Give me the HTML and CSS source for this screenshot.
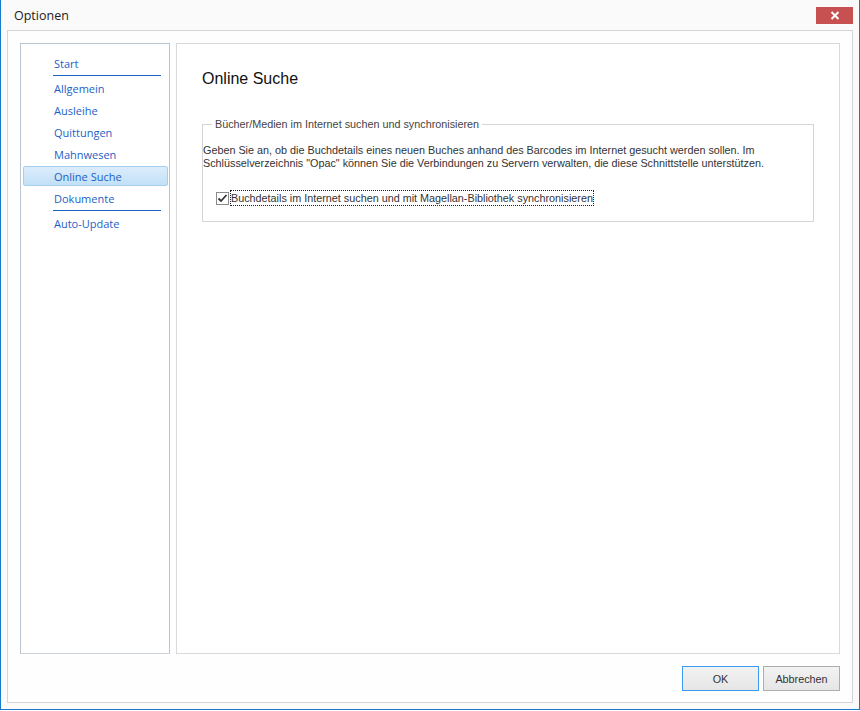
FILE: index.html
```html
<!DOCTYPE html>
<html lang="de">
<head>
    <meta charset="UTF-8">
    <title>Optionen</title>
    <link rel="stylesheet" href="styles.css">
</head>
<body>
    <div class="window">
        <div class="titlebar">
            <span class="title">Optionen</span>
            <button class="close-button" aria-label="Schließen">
                <svg width="10" height="9" viewBox="0 0 10 9"><path d="M1.5 1 L8.5 8 M8.5 1 L1.5 8" stroke="#fff" stroke-width="2" fill="none"/></svg>
            </button>
        </div>

        <div class="frame">
            <div class="main">
                <!-- Navigation -->
                <ul class="nav">
                    <li class="nav-item">Start</li>
                    <li class="nav-separator"></li>
                    <li class="nav-item">Allgemein</li>
                    <li class="nav-item">Ausleihe</li>
                    <li class="nav-item">Quittungen</li>
                    <li class="nav-item">Mahnwesen</li>
                    <li class="nav-item selected">Online Suche</li>
                    <li class="nav-item">Dokumente</li>
                    <li class="nav-separator"></li>
                    <li class="nav-item">Auto-Update</li>
                </ul>

                <!-- Page content -->
                <div class="content">
                    <h1>Online Suche</h1>
                    <fieldset class="group">
                        <legend>Bücher/Medien im Internet suchen und synchronisieren</legend>
                        <p class="group-text">Geben Sie an, ob die Buchdetails eines neuen Buches anhand des Barcodes im Internet gesucht werden sollen. Im<br>Schlüsselverzeichnis "Opac" können Sie die Verbindungen zu Servern verwalten, die diese Schnittstelle unterstützen.</p>
                        <label class="check-row">
                            <span class="checkbox">
                                <svg width="11" height="11" viewBox="0 0 11 11"><path d="M1.5 5.5 L4 8 L9.5 2" stroke="#333" stroke-width="1.8" fill="none"/></svg>
                            </span>
                            <span class="check-label">Buchdetails im Internet suchen und mit Magellan-Bibliothek synchronisieren</span>
                        </label>
                    </fieldset>
                </div>
            </div>

            <div class="footer">
                <button class="button default">OK</button>
                <button class="button">Abbrechen</button>
            </div>
        </div>
    </div>
</body>
</html>
```

FILE: styles.css
```css
body {
    margin: 0;
    padding: 0;
    background-color: #fff;
    font-family: 'Liberation Sans', Arial, sans-serif;
    color: #333;
}
.window {
    width: 860px;
    height: 710px;
    box-sizing: border-box;
    background-color: #fafafa;
    border-left: 1px solid #1979ca;
    border-right: 1px solid #1979ca;
    border-bottom: 1px solid #1979ca;
    padding: 0 6px 6px 6px;
    display: flex;
    flex-direction: column;
}
.titlebar {
    height: 30px;
    display: flex;
    align-items: flex-start;
    justify-content: space-between;
}
.title {
    font-family: 'Open Sans', sans-serif;
    font-size: 12.5px;
    color: #222;
    margin: 7px 0 0 7px;
}
.close-button {
    width: 37px;
    height: 17px;
    margin: 7px 0 0 0;
    border: none;
    padding: 0;
    background-color: #c75050;
    display: flex;
    align-items: center;
    justify-content: center;
}
.frame {
    flex: 1;
    background-color: #fefefe;
    border: 1px solid #d5d5d5;
    padding: 12px 12px 0 12px;
    display: flex;
    flex-direction: column;
}
.main {
    height: 611px;
    display: flex;
    gap: 6px;
}
.nav {
    width: 150px;
    box-sizing: border-box;
    margin: 0;
    padding: 9px 0 0 0;
    list-style: none;
    background-color: #fff;
    border: 1px solid #b9c6d2;
    border-bottom-color: #ccd5dd;
}
.nav-item {
    height: 20px;
    line-height: 20px;
    margin: 0 1px 2px 2px;
    padding-left: 30px;
    font-family: 'Open Sans', sans-serif;
    font-size: 11px;
    color: #1c5fc6;
    border: 1px solid transparent;
    box-sizing: border-box;
    border-radius: 2px;
}
.nav-item.selected {
    background: linear-gradient(#dcedfc, #c2e0f6);
    border-color: #a5cfee;
}
.nav-separator {
    height: 1px;
    width: 108px;
    margin: 0 0 2px 32px;
    background-color: #1c64c4;
}
.content {
    flex: 1;
    background-color: #fff;
    border: 1px solid #d9d9d9;
    padding: 25px 25px 0 25px;
}
.content h1 {
    margin: 0;
    font-size: 16px;
    font-weight: normal;
    line-height: 20px;
    color: #111;
}
.group {
    margin: 28px 0 0 0;
    padding: 13px 0 15px 0;
    border: 1px solid #d5d5d5;
}
.group legend {
    margin-left: 9px;
    padding: 0 3px;
    font-size: 10.8px;
    line-height: 14px;
    color: #444;
}
.group-text {
    margin: 0;
    font-size: 10.8px;
    line-height: 13px;
    color: #333;
}
.check-row {
    display: flex;
    align-items: center;
    margin: 20px 0 0 13px;
    font-size: 10.8px;
}
.checkbox {
    width: 13px;
    height: 13px;
    box-sizing: border-box;
    border: 1px solid #8a8a8a;
    background-color: #fff;
    display: flex;
    align-items: center;
    justify-content: center;
}
.check-label {
    margin-left: 1px;
    padding: 1px;
    outline: 1px dotted #222;
    outline-offset: -1px;
    line-height: 14px;
}
.footer {
    height: 25px;
    margin-top: 12px;
    display: flex;
    justify-content: flex-end;
    gap: 4px;
}
.button {
    width: 77px;
    height: 25px;
    border: 1px solid #adadad;
    background: linear-gradient(#f2f2f2, #e6e6e6);
    font-family: 'Liberation Sans', Arial, sans-serif;
    font-size: 10.8px;
    color: #333;
    padding: 0;
}
.button.default {
    border-color: #3d9af0;
}
```
